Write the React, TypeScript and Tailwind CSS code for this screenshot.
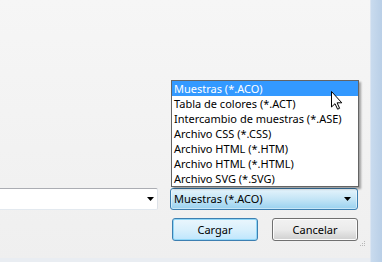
import React from "react";

const items = [
  "Muestras (*.ACO)",
  "Tabla de colores (*.ACT)",
  "Intercambio de muestras (*.ASE)",
  "Archivo CSS (*.CSS)",
  "Archivo HTML (*.HTM)",
  "Archivo HTML (*.HTML)",
  "Archivo SVG (*.SVG)",
];

function Arrow() {
  return (
    <svg width="7" height="4" viewBox="0 0 7 4" className="block">
      <path d="M0 0 H7 L3.5 4 Z" fill="#000" />
    </svg>
  );
}

function Cursor() {
  return (
    <svg width="12" height="19" viewBox="0 0 12 19" className="block">
      <path
        d="M0.5 0.5 L0.5 16 L4 12.7 L6.6 18.2 L8.6 17.3 L6.1 11.8 L10.8 11.8 Z"
        fill="#fff"
        stroke="#000"
        strokeWidth="1"
        strokeLinejoin="miter"
      />
    </svg>
  );
}

export default function App() {
  const font = { fontFamily: '"Noto Sans", "Open Sans", sans-serif' };
  return (
    <div className="w-[382px] h-[262px] flex flex-col overflow-hidden relative text-[11px] text-black" style={font}>
      <div className="flex flex-1">
        <div className="flex-1 flex flex-col bg-gradient-to-b from-[#f6f6f6] to-[#efefef] pt-[188px]">
          <div className="flex items-start gap-[12px]">
            <div className="w-[158px] h-[22px] bg-white border-y border-r border-[#abadb3] border-r-[#dde2e8] border-b-[#e3e9ef] flex items-center justify-end pr-[3px] rounded-r-[2px]">
              <Arrow />
            </div>
            <div className="w-[188px] h-[22px] rounded-[3px] border border-[#3c7fb1] bg-gradient-to-b from-[#e5f4fc] via-[#c4e5f6] to-[#98d1ef] flex items-center justify-between pl-[3px] pr-[6px] shadow-[inset_0_0_0_1px_rgba(255,255,255,0.45)]">
              <span className="leading-[20px] text-[11px]">Muestras (*.ACO)</span>
              <Arrow />
            </div>
          </div>
          <div className="flex gap-[14px] pl-[172px] mt-[8px]">
            <div className="w-[86px] h-[23px] rounded-[3px] border border-[#3c7fb1] bg-gradient-to-b from-[#eaf6fd] via-[#d9f0fc] to-[#bee6fd] flex items-center justify-center shadow-[inset_0_0_0_1px_#8fd6f7]">
              <span className="text-[11px] leading-[20px]">Cargar</span>
            </div>
            <div className="w-[86px] h-[23px] rounded-[3px] border border-[#707070] bg-gradient-to-b from-[#f2f2f2] via-[#ebebeb] to-[#cfcfcf] flex items-center justify-center shadow-[inset_0_0_0_1px_#fcfcfc]">
              <span className="text-[11px] leading-[20px]">Cancelar</span>
            </div>
          </div>
          <div className="flex-1 flex justify-end items-end pr-[4px] pb-[10px]">
            <svg width="7" height="7" viewBox="0 0 7 7">
              <rect x="5" y="0" width="1" height="1" fill="#b8b8b8" />
              <rect x="3" y="2" width="1" height="1" fill="#b8b8b8" />
              <rect x="5" y="2" width="1" height="1" fill="#b8b8b8" />
              <rect x="1" y="4" width="1" height="1" fill="#b8b8b8" />
              <rect x="3" y="4" width="1" height="1" fill="#b8b8b8" />
              <rect x="5" y="4" width="1" height="1" fill="#b8b8b8" />
            </svg>
          </div>
          <div className="h-[4px] bg-[#e9edf2]" />
        </div>
        <div className="w-[12px] bg-gradient-to-r from-[#c9dbee] to-[#b9cfe7] border-l border-[#dbe5f1]" />
      </div>
      <div className="h-[5px] bg-[#b6cce5]" />
      <div className="h-[2px] bg-[#2fa8e0]" />
      <div className="h-[2px] bg-[#0d2a44]" />

      <div className="absolute left-[171px] top-[80px] w-[188px] h-[107px] bg-white border border-[#646464] shadow-[2px_2px_2px_rgba(0,0,0,0.35)]">
        {items.map((t, i) => (
          <div
            key={t}
            className={
              i === 0
                ? "h-[15px] flex items-center pl-[2px] bg-[#3399ff] text-white"
                : "h-[15px] flex items-center pl-[2px]"
            }
          >
            <span className="text-[11px] leading-[15px] whitespace-nowrap">{t}</span>
          </div>
        ))}
      </div>
      <div className="absolute left-[331px] top-[91px]">
        <Cursor />
      </div>
    </div>
  );
}
